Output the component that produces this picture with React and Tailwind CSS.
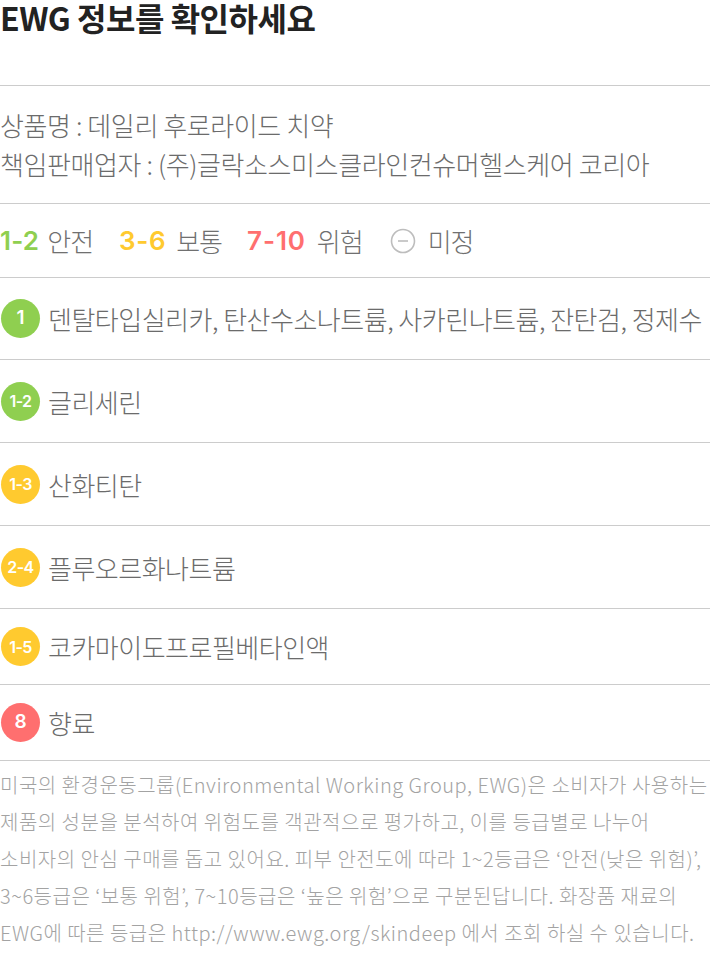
const rows = [
  { grade: "1", color: "bg-[#8fcf50]", text: "덴탈타입실리카, 탄산수소나트륨, 사카린나트륨, 잔탄검, 정제수", h: "h-[82px]" },
  { grade: "1-2", color: "bg-[#8fcf50]", text: "글리세린", h: "h-[83px]" },
  { grade: "1-3", color: "bg-[#ffca2f]", text: "산화티탄", h: "h-[83px]" },
  { grade: "2-4", color: "bg-[#ffca2f]", text: "플루오르화나트륨", h: "h-[83px]" },
  { grade: "1-5", color: "bg-[#ffca2f]", text: "코카마이도프로필베타인액", h: "h-[76px]" },
  { grade: "8", color: "bg-[#ff6f6f]", text: "향료", h: "h-[76px]" },
];

function Badge({ grade, color }) {
  const small = grade.length > 1;
  return (
    <div
      className={`ml-px w-[39px] h-[39px] shrink-0 rounded-full ${color} flex items-center justify-center text-white font-semibold font-['Inter','Noto_Sans_CJK_KR',sans-serif] ${
        small ? "text-[16px] tracking-[-0.6px]" : "text-[19px]"
      }`}
    >
      {grade}
    </div>
  );
}

export default function App() {
  return (
    <div className="w-[710px] bg-white font-['Noto_Sans_CJK_KR','Noto_Sans',sans-serif]">
      <div className="h-[86px] pt-[2px] border-b border-[#cccccc]">
        <h1 className="text-[32px] leading-[31px] font-bold text-[#222] tracking-[-0.5px]">EWG 정보를 확인하세요</h1>
      </div>

      <div className="pt-[19px] pb-[20px] border-b border-[#cccccc] text-[26px] font-light leading-[39px] tracking-[-0.4px] text-[#6b6b6b]">
        <p>상품명 : 데일리 후로라이드 치약</p>
        <p>책임판매업자 : (주)글락소스미스클라인컨슈머헬스케어 코리아</p>
      </div>

      <div className="h-[74px] flex items-center border-b border-[#cccccc] text-[26px]">
        <span className="font-semibold text-[#8fcf50] font-['Inter',sans-serif] tracking-[0.2px]">1-2</span>
        <span className="ml-[8px] font-light text-[#707070] tracking-[-1px]">안전</span>
        <span className="ml-[26px] font-semibold text-[#ffca2f] font-['Inter',sans-serif] tracking-[0.6px]">3-6</span>
        <span className="ml-[10px] font-light text-[#707070] tracking-[-1px]">보통</span>
        <span className="ml-[25px] font-semibold text-[#ff6f6f] font-['Inter',sans-serif] tracking-[0.9px]">7-10</span>
        <span className="ml-[11px] font-light text-[#707070] tracking-[-1px]">위험</span>
        <svg className="ml-[27px]" width="26" height="26" viewBox="0 0 26 26">
          <circle cx="13" cy="13" r="11.5" fill="none" stroke="#bdbdbd" strokeWidth="1.6" />
          <line x1="8" y1="13" x2="18" y2="13" stroke="#bdbdbd" strokeWidth="1.6" />
        </svg>
        <span className="ml-[12px] font-light text-[#707070] tracking-[-1px]">미정</span>
      </div>

      {rows.map((r) => (
        <div key={r.grade} className={`${r.h} flex items-center gap-[8px] border-b border-[#cccccc]`}>
          <Badge grade={r.grade} color={r.color} />
          <span className="text-[26px] font-light tracking-[-0.5px] text-[#6b6b6b] whitespace-nowrap">{r.text}</span>
        </div>
      ))}

      <div className="pt-[5px] text-[20px] font-light leading-[37px] text-[#a3a3a3] tracking-[0.5px] whitespace-nowrap">
        <p>미국의 환경운동그룹(Environmental Working Group, EWG)은 소비자가 사용하는</p>
        <p>제품의 성분을 분석하여 위험도를 객관적으로 평가하고, 이를 등급별로 나누어</p>
        <p>소비자의 안심 구매를 돕고 있어요. 피부 안전도에 따라 1~2등급은 ‘안전(낮은 위험)’,</p>
        <p>3~6등급은 ‘보통 위험’, 7~10등급은 ‘높은 위험’으로 구분된답니다. 화장품 재료의</p>
        <p>EWG에 따른 등급은 http://www.ewg.org/skindeep 에서 조회 하실 수 있습니다.</p>
      </div>
    </div>
  );
}
